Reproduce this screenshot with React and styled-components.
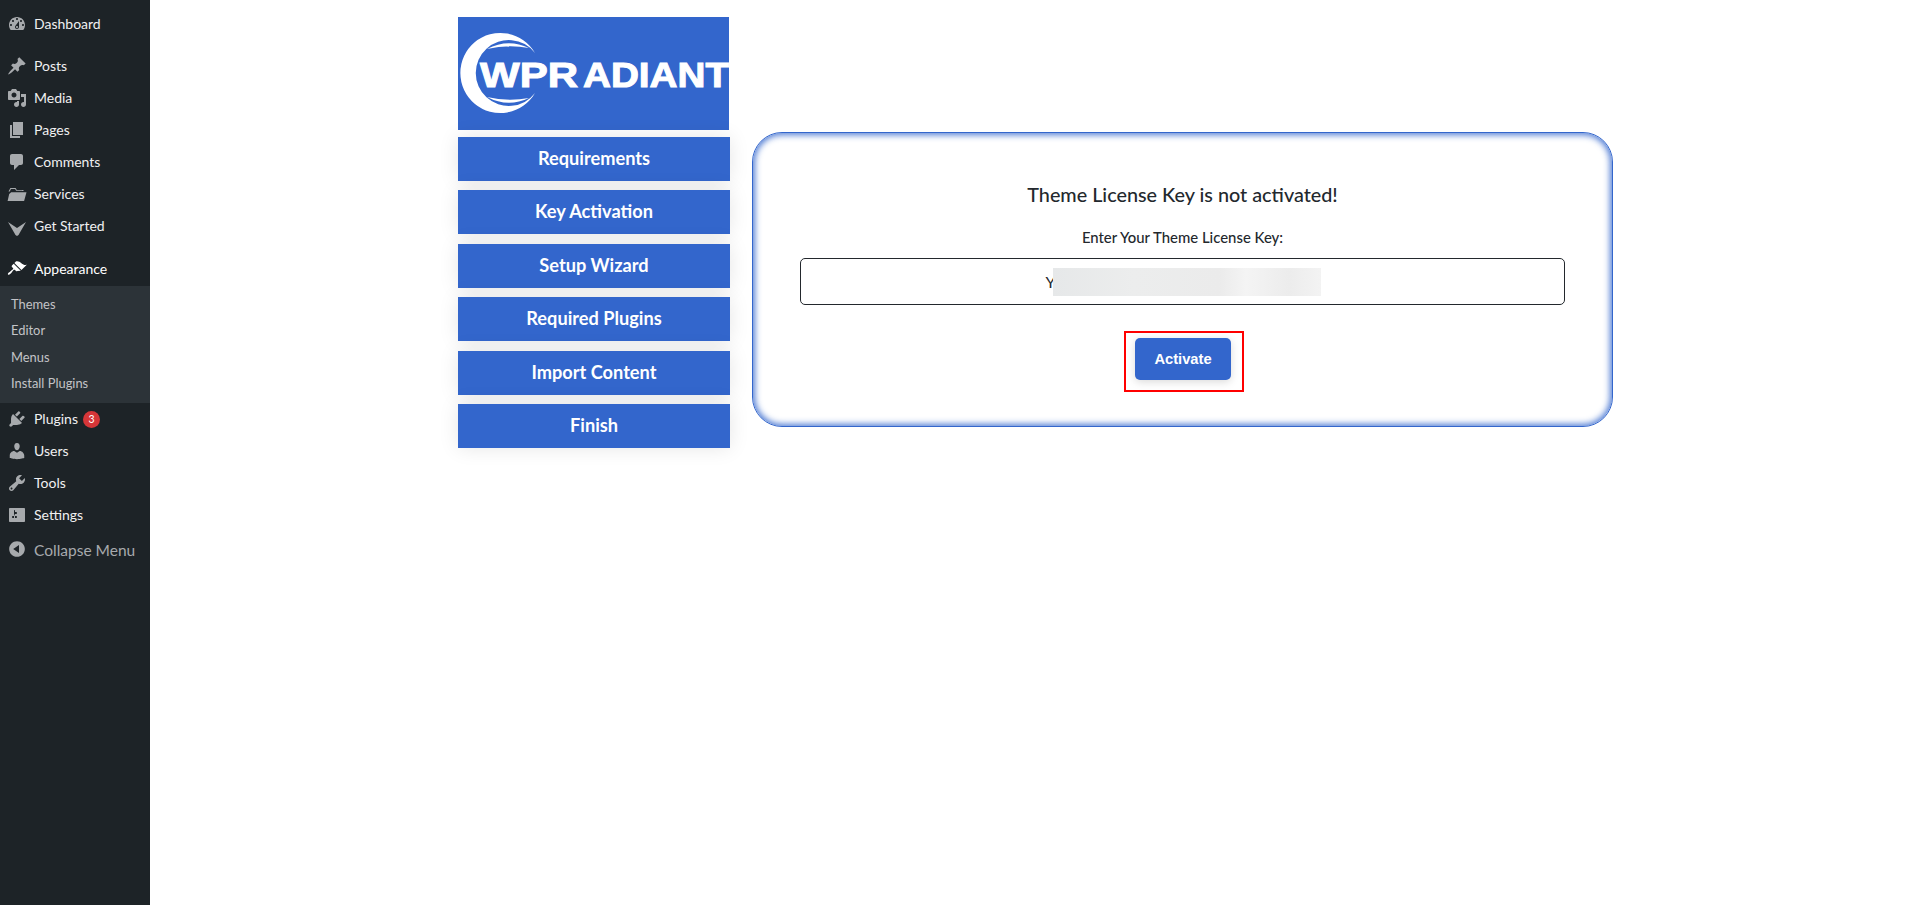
import React from 'react'
import styled, { createGlobalStyle } from 'styled-components'

const GlobalStyle = createGlobalStyle`
    html, body {
        margin: 0;
        padding: 0;
        background: #fff;
    }
    body {
        font-family: "Lato", "Noto Sans", sans-serif;
    }
`

// wp admin menu icons, all on a 20x20 box
const icons = {
    dashboard: 'M3.76 16h12.48c1.1-1.37 1.76-3.11 1.76-5 0-4.42-3.58-8-8-8s-8 3.58-8 8c0 1.89.66 3.63 1.76 5zM10 4c.55 0 1 .45 1 1s-.45 1-1 1-1-.45-1-1 .45-1 1-1zM6 6c.55 0 1 .45 1 1s-.45 1-1 1-1-.45-1-1 .45-1 1-1zm8 0c.55 0 1 .45 1 1s-.45 1-1 1-1-.45-1-1 .45-1 1-1zm-5.37 5.55L12 7v6c0 1.1-.9 2-2 2s-2-.9-2-2c0-.57.24-1.08.63-1.45zM4 10c.55 0 1 .45 1 1s-.45 1-1 1-1-.45-1-1 .45-1 1-1zm12 0c.55 0 1 .45 1 1s-.45 1-1 1-1-.45-1-1 .45-1 1-1zm-5 3c0-.55-.45-1-1-1s-1 .45-1 1 .45 1 1 1 1-.45 1-1z',
    post: 'M10.44 3.02l1.82-1.82 6.36 6.35-1.83 1.82c-1.05-.68-2.48-.57-3.41.36l-.75.75c-.92.93-1.04 2.35-.35 3.41l-1.83 1.82-2.41-2.41-2.8 2.79c-.42.42-3.38 2.71-3.8 2.29s1.86-3.39 2.28-3.81l2.79-2.79L4.1 9.36l1.83-1.82c1.05.69 2.48.57 3.41-.36l.75-.75c.93-.92 1.04-2.35.35-3.41z',
    media: 'M13 11V4c0-.55-.45-1-1-1h-1.67L9 1H5L3.67 3H2c-.55 0-1 .45-1 1v7c0 .55.45 1 1 1h10c.55 0 1-.45 1-1zM7 4.5c1.38 0 2.5 1.12 2.5 2.5S8.38 9.5 7 9.5 4.5 8.38 4.5 7 5.62 4.5 7 4.5zM14 6h5v10.5c0 1.38-1.12 2.5-2.5 2.5S14 17.88 14 16.5s1.12-2.5 2.5-2.5c.17 0 .34.02.5.05V9h-3V6zm-4 8.05V13h2v3.5c0 1.38-1.12 2.5-2.5 2.5S7 17.88 7 16.5 8.12 14 9.5 14c.17 0 .34.02.5.05z',
    page: 'M6 15V2h10v13H6zm-1 1h8v2H3V5h2v11z',
    comment: 'M5 2h9c1.1 0 2 .9 2 2v7c0 1.1-.9 2-2 2h-2l-5 5v-5H5c-1.1 0-2-.9-2-2V4c0-1.1.9-2 2-2z',
    folder: 'M1.5 7.5L2.6 5.4 3.4 4h5.2l1.2 2h6.7v1h-1.4v-.2h-6L8.1 5H4l-.9 1.7-.3.8H1.5zM4.2 8.2h15.3l-2.4 8.8H.6l1.6-7z',
    started: 'M1 6l9 6 9-6-7.500 13L10 20l-1.500-1z',
    appearance: 'M14.48 11.06L7.41 3.99l1.5-1.5c.5-.56 2.3-.47 3.51.32 1.21.8 1.43 1.28 2.91 2.1 1.18.64 2.45 1.26 4.45.85zm-.71.71L6.7 4.7 4.93 6.47c-.39.39-.39 1.02 0 1.41l1.06 1.06c.39.39.39 1.03 0 1.42-.6.6-1.43 1.11-2.21 1.69-.35.26-.7.53-1.01.84C1.43 13.23.4 14.85 1.02 15.5c.54.57 2.1-.41 3.03-1.35.28-.28.55-.62.83-.97.56-.77 1.07-1.57 1.7-2.19.39-.39 1.03-.39 1.41 0L9 12c.39.39 1.02.39 1.41 0z',
    plugin: 'M13.11 4.36L9.87 7.6 8 5.73l3.24-3.24c.35-.34 1.05-.2 1.56.32.52.51.66 1.21.31 1.55zm-8 1.77l.91-1.12 9.01 9.01-1.19.84c-.71.71-2.63 1.16-3.82 1.16H6.14L4.9 17.26c-.59.59-1.54.59-2.12 0-.59-.58-.59-1.53 0-2.12l1.24-1.24v-3.88c0-1.13.4-3.19 1.09-3.89zm7.26 3.97l3.24-3.24c.34-.35 1.04-.21 1.55.31.52.51.66 1.21.31 1.55l-3.24 3.25z',
    users: 'M10 9.25c-2.27 0-2.73-3.44-2.73-3.44C7 4.02 7.82 2 9.97 2c2.16 0 2.98 2.02 2.71 3.81 0 0-.41 3.44-2.68 3.44zm0 2.57L12.72 10c2.39 0 4.52 2.33 4.52 4.53v2.49s-3.65 1.13-7.24 1.13c-3.65 0-7.24-1.13-7.24-1.13v-2.49c0-2.25 1.94-4.48 4.47-4.48z',
    tools: 'M16.68 9.77c-1.34 1.34-3.3 1.67-4.95.99l-5.41 6.52c-.99.99-2.59.99-3.58 0s-.99-2.59 0-3.57l6.52-5.42c-.68-1.65-.35-3.61.99-4.95 1.28-1.28 3.12-1.62 4.72-1.06l-2.89 2.89 2.82 2.82 2.86-2.87c.53 1.58.18 3.39-1.08 4.65zM3.81 16.21c.4.39 1.04.39 1.43 0 .4-.4.4-1.04 0-1.43-.39-.4-1.03-.4-1.43 0-.39.39-.39 1.03 0 1.43z',
    settings: 'M18 16V4c0-.55-.45-1-1-1H3c-.55 0-1 .45-1 1v12c0 .55.45 1 1 1h14c.55 0 1-.45 1-1zM8 11h1c.55 0 1 .45 1 1s-.45 1-1 1H8v1.5c0 .28-.22.5-.5.5s-.5-.22-.5-.5V13H6c-.55 0-1-.45-1-1s.45-1 1-1h1V5.5c0-.28.22-.5.5-.5s.5.22.5.5V7h1c.55 0 1 .45 1 1s-.45 1-1 1h-1v5.5c0 .28-.22.5-.5.5s-.5-.22-.5-.5V9z',
    collapse: 'M10 2.16c4.33 0 7.84 3.51 7.84 7.84s-3.51 7.84-7.84 7.84S2.16 14.33 2.16 10 5.71 2.16 10 2.16zm2 11.72V6.12L6.18 9.97z',
}

const topItems = [
    { label: 'Posts', icon: 'post', gap: 10 },
    { label: 'Media', icon: 'media' },
    { label: 'Pages', icon: 'page' },
    { label: 'Comments', icon: 'comment' },
    { label: 'Services', icon: 'folder' },
    { label: 'Get Started', icon: 'started' },
]

const subItems = ['Themes', 'Editor', 'Menus', 'Install Plugins']

const lowerItems = [
    { label: 'Users', icon: 'users' },
    { label: 'Tools', icon: 'tools' },
    { label: 'Settings', icon: 'settings' },
]

const steps = ['Requirements', 'Key Activation', 'Setup Wizard', 'Required Plugins', 'Import Content', 'Finish']

function MenuIcon({ name, $light }) {
    return (
        <IconBox $light={$light} viewBox="0 0 20 20">
            <path d={icons[name]} />
        </IconBox>
    )
}

function Logo() {
    return (
        <LogoBox>
            <svg width="271" height="113" viewBox="0 0 271 113">
                <g fill="#fff">
                    <path d="M77 36A40 40 0 1 0 77 76A33 33 0 1 1 77 36z" />
                    <path d="M29 32Q50 21 71 31Q50 27 29 32z" />
                    <path d="M29 80Q50 91 71 81Q50 85 29 80z" />
                </g>
                <LogoText x="22" y="70" textLength="98" lengthAdjust="spacingAndGlyphs">WPR</LogoText>
                <LogoText x="125" y="70" textLength="146" lengthAdjust="spacingAndGlyphs">ADIANT</LogoText>
            </svg>
        </LogoBox>
    )
}

function App() {
    return (
        <Page>
            <GlobalStyle />
            <Sidebar>
                <MenuRow>
                    <MenuIcon name="dashboard" />
                    <MenuLabel>Dashboard</MenuLabel>
                </MenuRow>
                {topItems.map((item) => (
                    <MenuRow key={item.label} $gap={item.gap}>
                        <MenuIcon name={item.icon} />
                        <MenuLabel>{item.label}</MenuLabel>
                    </MenuRow>
                ))}
                <MenuRow $gap={11}>
                    <MenuIcon name="appearance" $light />
                    <MenuLabel $light>Appearance</MenuLabel>
                </MenuRow>
                <SubMenu>
                    {subItems.map((item) => (
                        <SubItem key={item}>{item}</SubItem>
                    ))}
                </SubMenu>
                <MenuRow>
                    <MenuIcon name="plugin" />
                    <MenuLabel>Plugins</MenuLabel>
                    <Badge>3</Badge>
                </MenuRow>
                {lowerItems.map((item) => (
                    <MenuRow key={item.label}>
                        <MenuIcon name={item.icon} />
                        <MenuLabel>{item.label}</MenuLabel>
                    </MenuRow>
                ))}
                <CollapseRow>
                    <MenuIcon name="collapse" />
                    <CollapseLabel>Collapse Menu</CollapseLabel>
                </CollapseRow>
            </Sidebar>
            <Main>
                <Steps>
                    <Logo />
                    {steps.map((step) => (
                        <StepButton key={step}>{step}</StepButton>
                    ))}
                </Steps>
                <Card>
                    <Title>Theme License Key is not activated!</Title>
                    <FieldLabel>Enter Your Theme License Key:</FieldLabel>
                    <KeyField>
                        <KeyStart>Y</KeyStart>
                        <BlurPatch />
                    </KeyField>
                    <Highlight>
                        <ActivateButton>Activate</ActivateButton>
                    </Highlight>
                </Card>
            </Main>
        </Page>
    )
}

export default App

const Page = styled.div`
    display: flex;
    min-height: 905px;
`
const Sidebar = styled.nav`
    width: 150px;
    flex-shrink: 0;
    background: #1d2327;
    padding-top: 8px;
    box-sizing: border-box;
`
const MenuRow = styled.div`
    display: flex;
    align-items: center;
    height: 32px;
    padding-left: 7px;
    margin-top: ${(props) => props.$gap || 0}px;
`
const IconBox = styled.svg`
    width: 20px;
    height: 20px;
    flex-shrink: 0;
    fill: ${(props) => (props.$light ? '#fff' : '#a7aaad')};
`
const MenuLabel = styled.span`
    margin-left: 7px;
    padding-bottom: 2px;
    font-size: 14px;
    color: ${(props) => (props.$light ? '#fff' : '#f0f0f1')};
`
const SubMenu = styled.div`
    background: #2c3338;
    padding: 6px 0;
    margin-top: 1px;
`
const SubItem = styled.div`
    height: 26.3px;
    line-height: 25px;
    padding-left: 11px;
    font-size: 12.9px;
    color: #c3c4c7;
`
const Badge = styled.span`
    width: 17px;
    height: 17px;
    margin-left: 5px;
    border-radius: 50%;
    background: #d63638;
    color: #fff;
    font-size: 10.5px;
    line-height: 17px;
    text-align: center;
`
const CollapseRow = styled.div`
    display: flex;
    align-items: center;
    height: 36px;
    padding-left: 7px;
`
const CollapseLabel = styled.span`
    margin-left: 7px;
    padding-top: 2px;
    font-size: 15.500px;
    color: #a7aaad;
`
const Main = styled.main`
    flex: 1;
    display: flex;
    align-items: flex-start;
    gap: 22px;
    padding: 17px 0 0 308px;
`
const Steps = styled.div`
    width: 272px;
    display: flex;
    flex-direction: column;
    gap: 9.4px;
`
const LogoBox = styled.div`
    width: 271px;
    height: 113px;
    margin-bottom: -2.4px;
    background: #3366cc;

    svg {
        display: block;
    }
`
const LogoText = styled.text`
    font-family: "Liberation Sans", sans-serif;
    font-weight: 700;
    font-size: 35px;
    fill: #fff;
    stroke: #fff;
    stroke-width: 1px;
`
const StepButton = styled.div`
    height: 44px;
    box-sizing: border-box;
    padding-bottom: 2px;
    display: flex;
    align-items: center;
    justify-content: center;
    background: #3366cc;
    color: #fff;
    font-size: 18.2px;
    font-weight: 700;
    box-shadow: 0 0 20px rgba(0, 0, 0, 0.1);
`
const Card = styled.section`
    width: 861px;
    height: 295px;
    margin-top: 115px;
    box-sizing: border-box;
    display: flex;
    flex-direction: column;
    align-items: center;
    padding: 0 47px;
    border: 1px solid #3366cc;
    border-radius: 30px;
    box-shadow: inset 0 0 6px 2px rgba(51, 102, 204, 0.85);
`
const Title = styled.h2`
    margin: 49px 0 0;
    font-size: 19.8px;
    line-height: 24px;
    font-weight: 500;
    color: #23282d;
`
const FieldLabel = styled.div`
    margin-top: 22px;
    font-size: 14.9px;
    line-height: 18px;
    font-weight: 500;
    color: #23282d;
`
const KeyField = styled.div`
    width: 100%;
    height: 47px;
    margin-top: 12px;
    padding-left: 2px;
    box-sizing: border-box;
    display: flex;
    align-items: center;
    justify-content: center;
    border: 1px solid #23282d;
    border-radius: 5px;
    font-size: 16px;
    color: #23282d;
`
const KeyStart = styled.span`
    margin-right: -2px;
`
const BlurPatch = styled.span`
    width: 268px;
    height: 28px;
    background: linear-gradient(90deg, #e6e8e9 0%, #eceded 30%, #ebebeb 62%, #f4f4f4 72%, #ececec 88%, #f3f3f3 100%);
`
const Highlight = styled.div`
    margin: 26px 0 0 3px;
    box-sizing: border-box;
    width: 120px;
    height: 61px;
    padding: 5px 2px 0 0;
    display: flex;
    align-items: flex-start;
    justify-content: center;
    border: 2px solid #ff0000;
`
const ActivateButton = styled.button`
    width: 96px;
    height: 42px;
    padding: 0;
    border: none;
    border-radius: 5px;
    background: #3366cc;
    color: #fff;
    font-family: "Liberation Sans", sans-serif;
    font-size: 14.7px;
    font-weight: 700;
    box-shadow: 0 2px 8px rgba(0, 0, 0, 0.15);
`
